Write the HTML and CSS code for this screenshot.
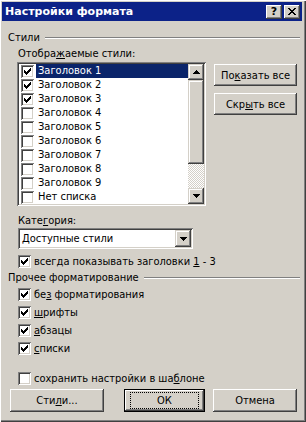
FILE: index.html
```html
<!DOCTYPE html>
<html lang="ru">
<head>
    <meta charset="UTF-8">
    <title>Настройки формата</title>
    <link rel="stylesheet" href="styles.css">
</head>
<body>
    <div class="window">
        <!-- Caption -->
        <div class="titlebar">
            <span class="title">Настройки формата</span>
            <span class="caption-buttons">
                <span class="cap-btn help">?</span>
                <span class="cap-btn close">
                    <svg width="8" height="7" viewBox="0 0 8 7" shape-rendering="crispEdges">
                        <path d="M0 0h2v1h-2zM6 0h2v1h-2zM1 1h2v1h-2zM5 1h2v1h-2zM2 2h4v1h-4zM3 3h2v1h-2zM2 4h4v1h-4zM1 5h2v1h-2zM5 5h2v1h-2zM0 6h2v1h-2zM6 6h2v1h-2z" fill="#000"/>
                    </svg>
                </span>
            </span>
        </div>

        <div class="content">
            <div class="group-title"><span>Стили</span><span class="etched"></span></div>

            <div class="styles-block">
                <div class="label">Отобра<u>ж</u>аемые стили:</div>
                <div class="list-row">
                    <div class="listbox">
                        <ul class="items">
                            <li class="item selected"><span class="cb on"></span><span class="item-text">Заголовок 1</span></li>
                            <li class="item"><span class="cb on"></span><span class="item-text">Заголовок 2</span></li>
                            <li class="item"><span class="cb on"></span><span class="item-text">Заголовок 3</span></li>
                            <li class="item"><span class="cb"></span><span class="item-text">Заголовок 4</span></li>
                            <li class="item"><span class="cb"></span><span class="item-text">Заголовок 5</span></li>
                            <li class="item"><span class="cb"></span><span class="item-text">Заголовок 6</span></li>
                            <li class="item"><span class="cb"></span><span class="item-text">Заголовок 7</span></li>
                            <li class="item"><span class="cb"></span><span class="item-text">Заголовок 8</span></li>
                            <li class="item"><span class="cb"></span><span class="item-text">Заголовок 9</span></li>
                            <li class="item"><span class="cb"></span><span class="item-text">Нет списка</span></li>
                        </ul>
                        <div class="vscroll">
                            <span class="sb-btn">
                                <svg width="7" height="4" viewBox="0 0 7 4"><path d="M3 0h1v1h1v1h1v1h1v1h-7v-1h1v-1h1v-1h1z" fill="#000"/></svg>
                            </span>
                            <span class="sb-thumb"></span>
                            <span class="sb-track"></span>
                            <span class="sb-btn">
                                <svg width="7" height="4" viewBox="0 0 7 4"><path d="M0 0h7v1h-1v1h-1v1h-1v1h-1v-1h-1v-1h-1v-1h-1z" fill="#000"/></svg>
                            </span>
                        </div>
                    </div>
                    <div class="side-buttons">
                        <button class="btn side">По<u>к</u>азать все</button>
                        <button class="btn side">Скр<u>ы</u>ть все</button>
                    </div>
                </div>

                <div class="label category">Кате<u>г</u>ория:</div>
                <div class="combo">
                    <span class="combo-value">Доступные стили</span>
                    <span class="combo-btn">
                        <svg width="7" height="4" viewBox="0 0 7 4"><path d="M0 0h7v1h-1v1h-1v1h-1v1h-1v-1h-1v-1h-1v-1h-1z" fill="#000"/></svg>
                    </span>
                </div>
                <div class="check first"><span class="cb on"></span><span>всегда показывать заголовки <u>1</u> - 3</span></div>
            </div>

            <div class="group-title other"><span>Прочее форматирование</span><span class="etched"></span></div>

            <div class="other-block">
                <div class="check"><span class="cb on"></span><span>бе<u>з</u> форматирования</span></div>
                <div class="check"><span class="cb on"></span><span><u>ш</u>рифты</span></div>
                <div class="check"><span class="cb on"></span><span><u>а</u>бзацы</span></div>
                <div class="check"><span class="cb on"></span><span><u>с</u>писки</span></div>
            </div>

            <div class="check save"><span class="cb"></span><span>сохранить настройки в ша<u>б</u>лоне</span></div>

            <div class="footer-buttons">
                <button class="btn styles-btn">Сти<u>л</u>и...</button>
                <button class="btn default"><span class="focus">ОК</span></button>
                <button class="btn cancel">Отмена</button>
            </div>
        </div>
    </div>
</body>
</html>
```

FILE: styles.css
```css
html, body {
    margin: 0;
    padding: 0;
}

body {
    background: #d4d0c8;
    color: #000;
    font-family: 'DejaVu Sans Condensed', 'DejaVu Sans', sans-serif;
    font-stretch: condensed;
    font-size: 11px;
    line-height: 13px;
}

u {
    text-decoration: underline;
    text-underline-offset: 1px;
}

/* Window frame */
.window {
    width: 306px;
    height: 422px;
    box-sizing: border-box;
    padding: 2px 4px 3px 2px;
    background: #d4d0c8;
    box-shadow: inset 1px 1px #fff, inset -1px -1px #404040, inset -2px -2px #808080;
}

.titlebar {
    height: 19px;
    background: #0c2288;
    color: #fff;
    display: flex;
    align-items: center;
    justify-content: space-between;
    padding: 0 2px 0 3px;
}

.title {
    font-family: 'DejaVu Sans', sans-serif;
    font-stretch: normal;
    font-weight: bold;
    font-size: 11px;
}

.caption-buttons {
    display: flex;
    gap: 2px;
}

.cap-btn {
    width: 16px;
    height: 14px;
    box-sizing: border-box;
    background: #d4d0c8;
    color: #000;
    display: flex;
    align-items: center;
    justify-content: center;
    font-family: 'DejaVu Sans', sans-serif;
    font-stretch: normal;
    font-weight: bold;
    font-size: 11px;
    box-shadow: inset -1px -1px #404040, inset 1px 1px #fff, inset -2px -2px #808080;
}

/* Content */
.content {
    display: flex;
    flex-direction: column;
    padding: 0 2px 0 6px;
}

.group-title {
    display: flex;
    align-items: center;
    margin-top: 10px;
    height: 13px;
}

.group-title.other {
    margin-top: 3px;
}

.etched {
    flex: 1;
    height: 0;
    border-top: 1px solid #808080;
    border-bottom: 1px solid #fff;
    margin-left: 5px;
}

.styles-block {
    display: flex;
    flex-direction: column;
}

.label {
    margin-top: 3px;
    margin-left: 10px;
    height: 13px;
}

.label.category {
    margin-top: 8px;
}

.list-row {
    display: flex;
    margin-top: 2px;
}

.listbox {
    margin-left: 9px;
    width: 189px;
    height: 144px;
    box-sizing: border-box;
    padding: 2px;
    background: #fff;
    display: flex;
    box-shadow: inset 1px 1px #808080, inset -1px -1px #fff, inset 2px 2px #404040, inset -2px -2px #d4d0c8;
}

.items {
    list-style: none;
    margin: 0;
    padding: 0;
    flex: 1;
}

.item {
    height: 14px;
    display: flex;
    align-items: center;
    padding-left: 2px;
}

.item .cb {
    margin-right: 2px;
}

.item-text {
    padding: 0 2px;
    height: 14px;
    line-height: 14px;
    flex: 1;
}

.item.selected .item-text {
    background: #0a246a;
    color: #fff;
}

/* Checkbox */
.cb {
    width: 13px;
    height: 13px;
    flex: none;
    box-sizing: border-box;
    background: #fff;
    box-shadow: inset 1px 1px #808080, inset -1px -1px #fff, inset 2px 2px #404040, inset -2px -2px #d4d0c8;
    position: relative;
}

.cb.on::after {
    content: '';
    position: absolute;
    left: 3px;
    top: 3px;
    width: 7px;
    height: 7px;
    background: url("data:image/svg+xml,%3Csvg xmlns='http://www.w3.org/2000/svg' width='7' height='7' shape-rendering='crispEdges'%3E%3Cpath d='M6 0h1v3h-1zM5 1h1v3h-1zM4 2h1v3h-1zM3 3h1v3h-1zM2 4h1v3h-1zM1 3h1v3h-1zM0 2h1v3h-1z' fill='%23000'/%3E%3C/svg%3E") no-repeat;
}

/* Scrollbar */
.vscroll {
    width: 16px;
    display: flex;
    flex-direction: column;
}

.sb-btn {
    height: 16px;
    flex: none;
    background: #d4d0c8;
    display: flex;
    align-items: center;
    justify-content: center;
    box-shadow: inset -1px -1px #404040, inset 1px 1px #d4d0c8, inset -2px -2px #808080, inset 2px 2px #fff;
}

.sb-thumb {
    height: 84px;
    flex: none;
    background: #d4d0c8;
    box-shadow: inset -1px -1px #404040, inset 1px 1px #d4d0c8, inset -2px -2px #808080, inset 2px 2px #fff;
}

.sb-track {
    flex: 1;
    background: repeating-conic-gradient(#fff 0 25%, #d4d0c8 0 50%) 0 0 / 2px 2px;
}

/* Buttons */
.btn {
    font-family: inherit;
    font-stretch: inherit;
    font-size: 11px;
    color: #000;
    background: #d4d0c8;
    border: none;
    padding: 0;
    height: 23px;
    box-shadow: inset -1px -1px #404040, inset 1px 1px #fff, inset -2px -2px #808080, inset 2px 2px #d4d0c8;
}

.side-buttons {
    display: flex;
    flex-direction: column;
    gap: 7px;
    margin-left: 8px;
    margin-top: 2px;
}

.btn.side {
    width: 83px;
    height: 22px;
}

/* Combo box */
.combo {
    margin-top: 1px;
    margin-left: 10px;
    width: 175px;
    height: 21px;
    box-sizing: border-box;
    padding: 2px;
    background: #fff;
    display: flex;
    align-items: stretch;
    box-shadow: inset 1px 1px #808080, inset -1px -1px #fff, inset 2px 2px #404040, inset -2px -2px #d4d0c8;
}

.combo-value {
    flex: 1;
    padding-left: 2px;
    display: flex;
    align-items: center;
}

.combo-btn {
    width: 16px;
    background: #d4d0c8;
    display: flex;
    align-items: center;
    justify-content: center;
    box-shadow: inset -1px -1px #404040, inset 1px 1px #d4d0c8, inset -2px -2px #808080, inset 2px 2px #fff;
}

/* Check rows */
.check {
    display: flex;
    align-items: center;
    gap: 3px;
    height: 13px;
    margin-left: 10px;
}

.check.first {
    margin-top: 6px;
}

.other-block {
    display: flex;
    flex-direction: column;
    gap: 5px;
    margin-top: 4px;
}

.check.save {
    margin-top: 17px;
}

.footer-buttons {
    display: flex;
    margin-top: 4px;
    margin-left: 2px;
}

.styles-btn {
    width: 94px;
}

.btn.default {
    width: 81px;
    margin-left: 20px;
    box-shadow: inset 0 0 0 1px #000, inset -2px -2px #404040, inset 2px 2px #fff, inset -3px -3px #808080;
    display: flex;
    align-items: center;
    justify-content: center;
}

.focus {
    width: 67px;
    height: 15px;
    line-height: 15px;
    outline: 1px dotted #000;
    text-align: center;
}

.btn.cancel {
    width: 84px;
    margin-left: 8px;
}
```
